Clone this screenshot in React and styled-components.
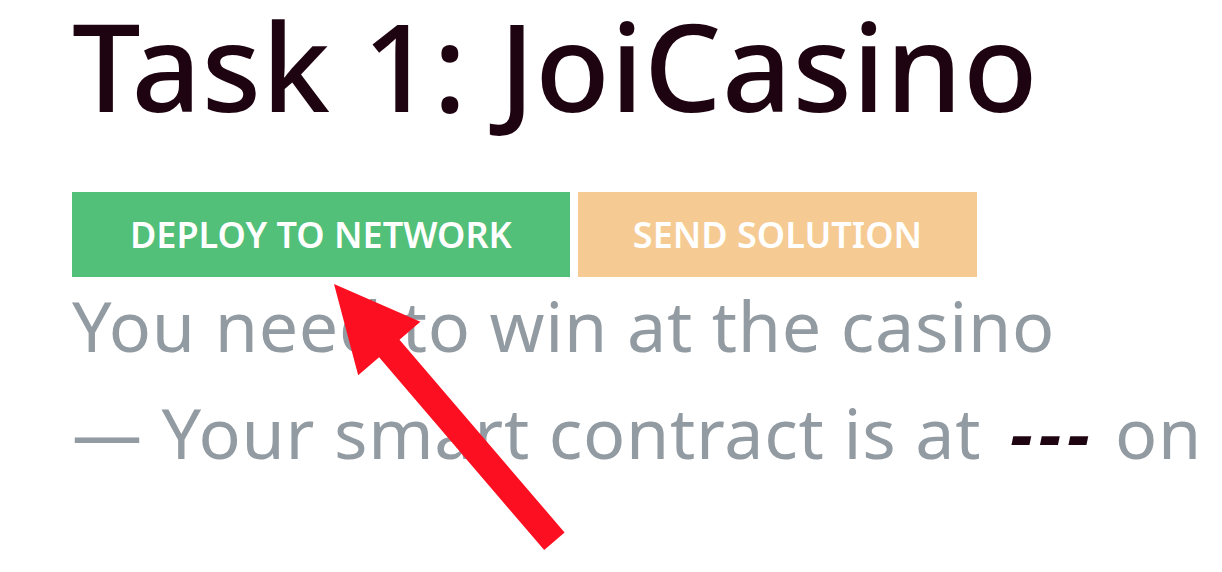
import React from "react";
import styled, { createGlobalStyle } from "styled-components";

const GlobalStyle = createGlobalStyle`
  html, body {
    margin: 0;
    padding: 0;
    background: #fff;
  }
  body {
    font-family: "Noto Sans", "Open Sans", sans-serif;
    overflow: hidden;
  }
`;

const Page = styled.main`
  position: relative;
  width: 1222px;
  height: 572px;
  padding-left: 72px;
  box-sizing: border-box;
  overflow: hidden;
`;

const Title = styled.h1`
  margin: -10px 0 0;
  font-size: 122px;
  line-height: 150px;
  font-weight: 500;
  letter-spacing: 0.6px;
  color: #1e0310;
  white-space: nowrap;
`;

const Actions = styled.div`
  display: flex;
  gap: 8px;
  margin-top: 52px;
`;

const Button = styled.button`
  height: 85px;
  padding: 0 ${(p) => p.$pad}px;
  border: none;
  border-radius: 0;
  display: flex;
  align-items: center;
  justify-content: center;
  font-family: inherit;
  font-size: 36px;
  font-weight: 600;
  text-transform: uppercase;
  color: #fff;
  background: ${(p) => p.$bg};
  cursor: pointer;
  white-space: nowrap;
`;

const Description = styled.div`
  margin-top: -5px;
  font-size: 70px;
  line-height: 107px;
  letter-spacing: 0.7px;
  color: #939ba2;
  white-space: nowrap;
`;

const Line = styled.p`
  margin: 0;
`;

const Address = styled.code`
  font-family: inherit;
  font-style: italic;
  font-weight: 700;
  letter-spacing: 6px;
  padding-left: 10px;
  color: #1e0310;
`;

const Arrow = styled.svg`
  position: absolute;
  left: 0;
  top: 0;
  pointer-events: none;
`;

export default function App() {
  return (
    <>
      <GlobalStyle />
      <Page>
        <Title>Task 1: JoiCasino</Title>
        <Actions>
          <Button $bg="#52c078" $pad={58}>Deploy to network</Button>
          <Button $bg="#f5cb93" $pad={55}>Send solution</Button>
        </Actions>
        <Description>
          <Line>You need to win at the casino</Line>
          <Line>
            — Your smart contract is at <Address>---</Address> on
          </Line>
        </Description>
        <Arrow width="1222" height="572" viewBox="0 0 1222 572">
          <polygon
            fill="#fc0f20"
            points="334,284 420.4,321.8 399.5,339.7 564.6,532.5 544.2,550.1 379.1,357.3 358.2,375.2"
          />
        </Arrow>
      </Page>
    </>
  );
}
